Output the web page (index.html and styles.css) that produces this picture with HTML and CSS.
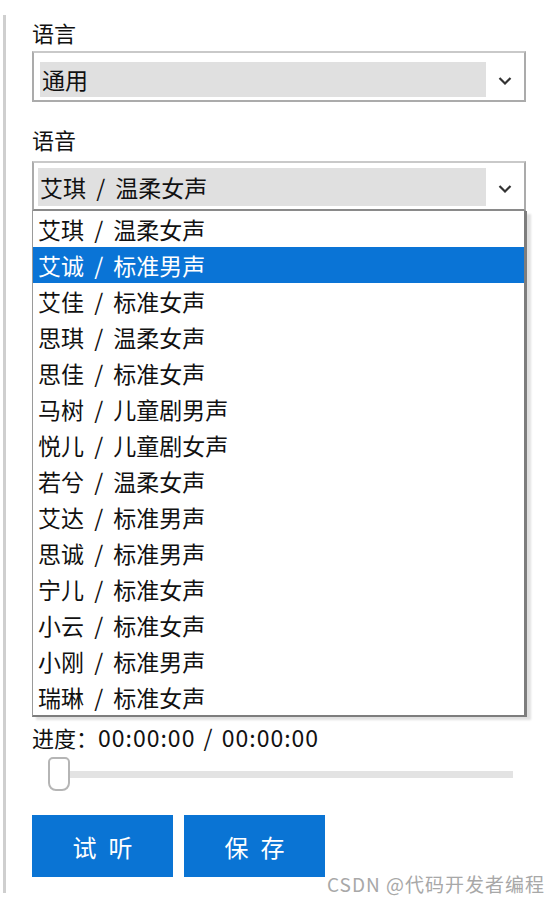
FILE: index.html
```html
<!DOCTYPE html>
<html lang="zh-CN">
<head>
  <meta charset="UTF-8">
  <meta name="viewport" content="width=device-width, initial-scale=1.0">
  <title>语音设置</title>
  <link rel="stylesheet" href="styles.css">
</head>
<body>
  <div class="panel">
    <!-- Language -->
    <div class="label">语言</div>
    <div class="select select-lang">
      <div class="select-value">通用</div>
      <div class="select-arrow">
        <svg width="14" height="10" viewBox="0 0 14 10"><path d="M1.5 2 L7 7.5 L12.5 2" fill="none" stroke="#333" stroke-width="2.2"/></svg>
      </div>
    </div>

    <!-- Voice -->
    <div class="label label-voice">语音</div>
    <div class="select select-voice">
      <div class="select-value">艾琪 / 温柔女声</div>
      <div class="select-arrow">
        <svg width="14" height="10" viewBox="0 0 14 10"><path d="M1.5 2 L7 7.5 L12.5 2" fill="none" stroke="#333" stroke-width="2.2"/></svg>
      </div>
    </div>

    <!-- Open dropdown list -->
    <ul class="listbox">
      <li>艾琪 / 温柔女声</li>
      <li class="active">艾诚 / 标准男声</li>
      <li>艾佳 / 标准女声</li>
      <li>思琪 / 温柔女声</li>
      <li>思佳 / 标准女声</li>
      <li>马树 / 儿童剧男声</li>
      <li>悦儿 / 儿童剧女声</li>
      <li>若兮 / 温柔女声</li>
      <li>艾达 / 标准男声</li>
      <li>思诚 / 标准男声</li>
      <li>宁儿 / 标准女声</li>
      <li>小云 / 标准女声</li>
      <li>小刚 / 标准男声</li>
      <li>瑞琳 / 标准女声</li>
    </ul>

    <!-- Progress -->
    <div class="progress-text">进度：<span class="time">00:00:00 / 00:00:00</span></div>
    <div class="slider">
      <div class="slider-thumb"></div>
      <div class="slider-track"></div>
    </div>

    <!-- Actions -->
    <div class="actions">
      <button class="btn">试听</button>
      <button class="btn">保存</button>
    </div>
  </div>

  <div class="watermark">CSDN @代码开发者编程</div>
</body>
</html>
```

FILE: styles.css
```css
/* General Styles */
body {
  margin: 0;
  font-family: "Microsoft YaHei", "Noto Sans CJK SC", sans-serif;
  color: #111;
  background-color: #fff;
  position: relative;
  height: 902px;
  overflow: hidden;
}

.panel {
  margin: 15px 0 0 3px;
  height: 878px;
  box-sizing: border-box;
  border-left: 3px solid #cfcfcf;
  padding: 2px 0 0 26px;
  width: 524px;
}

.label {
  font-size: 22px;
  line-height: 30px;
  height: 30px;
}

.label-voice {
  margin-top: 22px;
}

/* Fake combo boxes */
.select {
  margin-top: 4px;
  height: 51px;
  width: 494px;
  box-sizing: border-box;
  display: flex;
  border: 2px solid #ababab;
  border-top-color: #c9c9c9;
  background-color: #fff;
  padding: 9px 0 2px 6px;
}

.select-voice {
  margin-top: 7px;
  height: 50px;
  padding: 5px 0 2px 4px;
  border-bottom-color: #8a8a8a;
}

.select-value {
  flex: 1;
  background-color: #e0e0e0;
  font-size: 23px;
  line-height: 35px;
  height: 35px;
  padding-left: 2px;
  white-space: nowrap;
  word-spacing: 5px;
}

.select-voice .select-value {
  height: 38px;
  line-height: 38px;
}

.select-arrow {
  width: 38px;
  display: flex;
  align-items: center;
  justify-content: center;
  padding-top: 2px;
}

/* Dropdown list */
.listbox {
  list-style: none;
  margin: 0;
  padding: 0;
  width: 495px;
  box-sizing: border-box;
  border-left: 1px solid #9a9a9a;
  border-right: 3px solid #7d7d7d;
  border-bottom: 2px solid #7d7d7d;
  box-shadow: 4px 3px 2px rgba(0, 0, 0, 0.12);
  background-color: #fff;
}

.listbox li {
  height: 36px;
  line-height: 36px;
  font-size: 23px;
  padding-left: 5px;
  white-space: nowrap;
  word-spacing: 5px;
}

.listbox li.active {
  background-color: #0a74d6;
  color: #fff;
}

/* Progress */
.progress-text {
  margin-top: 5px;
  font-size: 22px;
  line-height: 30px;
  height: 30px;
  white-space: nowrap;
}

.time {
  font-size: 23px;
  letter-spacing: 1px;
  word-spacing: 2px;
}

.slider {
  display: flex;
  align-items: center;
  margin: 4px 14px 0 16px;
  height: 36px;
}

.slider-thumb {
  width: 22px;
  height: 34px;
  box-sizing: border-box;
  border: 2px solid #b5b5b5;
  border-radius: 5px 5px 8px 8px;
  background-color: #fff;
}

.slider-track {
  flex: 1;
  height: 7px;
  background-color: #e3e3e3;
}

/* Buttons */
.actions {
  display: flex;
  gap: 11px;
  margin-top: 23px;
}

.btn {
  width: 141px;
  height: 62px;
  border: none;
  background-color: #0a74d4;
  color: #fff;
  font-family: "Microsoft YaHei", "Noto Sans CJK SC", sans-serif;
  font-size: 24px;
  letter-spacing: 12px;
  text-indent: 12px;
  cursor: pointer;
  padding: 0;
}

.btn:hover {
  background-color: #0862b5;
}

/* Watermark */
.watermark {
  position: absolute;
  right: 13px;
  top: 873px;
  font-size: 19px;
  line-height: 22px;
  letter-spacing: 1px;
  color: #a8a8a8;
}
```
